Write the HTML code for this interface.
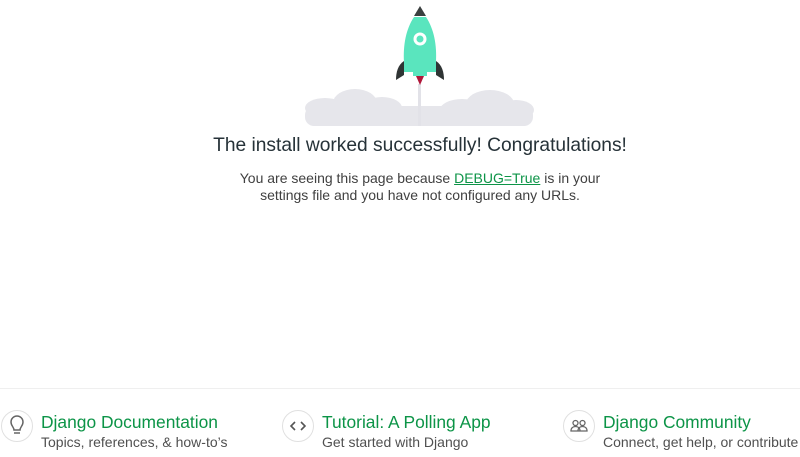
<!DOCTYPE html>
<html><head><meta charset="utf-8"><style>
*{margin:0;padding:0;box-sizing:border-box}
body{width:800px;height:457px;overflow:hidden;background:#fff;font-family:"Liberation Sans",sans-serif;position:relative;color:#263238}
.abs{position:absolute}
h1{position:absolute;top:135px;left:0;width:840px;text-align:center;font-size:19.2px;font-weight:normal;color:#263238;white-space:nowrap}
p.m{position:absolute;top:170px;left:0;width:840px;text-align:center;font-size:14px;line-height:17px;color:#404040;white-space:nowrap}
p.m a{color:#0c9447;text-decoration:underline}
.hr{position:absolute;top:388px;left:0;width:800px;height:1px;background:#efefef}
.it{position:absolute;top:411px;white-space:nowrap}
.ic{position:absolute;top:410px;width:32px;height:32px;border:1px solid #e0e0e0;border-radius:50%}
.t{font-size:17.4px;color:#0c9447;line-height:22px}
.s{font-size:14px;color:#505050;line-height:18px}
</style></head><body>
<svg class="abs" style="left:300px;top:0" width="240" height="130" viewBox="0 0 240 130">
<g fill="#e6e6eb">
<ellipse cx="55" cy="103" rx="22" ry="14"/><ellipse cx="82" cy="108" rx="20" ry="11"/><ellipse cx="25" cy="108" rx="20" ry="10"/><ellipse cx="105" cy="114" rx="14" ry="8"/>
<rect x="5" y="106" width="228" height="20" rx="9"/>
<ellipse cx="190" cy="104" rx="24" ry="14"/><ellipse cx="162" cy="110" rx="22" ry="11"/><ellipse cx="216" cy="110" rx="18" ry="10"/><ellipse cx="135" cy="115" rx="14" ry="8"/>
</g>
<rect x="118" y="84" width="3" height="42" fill="#e2e2e8"/>
<path d="M116 76h8l-4 9z" fill="#b0173a"/>
<path d="M120 6l-6 10h12z" fill="#3a3f3f"/>
<path d="M114 17h12c8 12 11 28 10 45v10h-32v-10c-1-17 2-33 10-45z" fill="#5ae5be"/>
<rect x="113" y="72" width="14" height="4" fill="#5ae5be"/>
<circle cx="120" cy="39" r="5" fill="none" stroke="#fff" stroke-width="3"/>
<path d="M104 61c-6 4-8 11-8 19l8-5z" fill="#2f3434"/>
<path d="M136 61c6 4 8 11 8 19l-8-5z" fill="#2f3434"/>
</svg>
<h1>The install worked successfully! Congratulations!</h1>
<p class="m">You are seeing this page because <a>DEBUG=True</a> is in your<br>settings file and you have not configured any URLs.</p>
<div class="hr"></div>
<div class="ic" style="left:1px"><svg width="30" height="30" viewBox="0 0 30 30"><path d="M12 19c0-3-3-4-3-8a6 6 0 0112 0c0 4-3 5-3 8z M12 22h6" fill="none" stroke="#666" stroke-width="1.5"/></svg></div>
<div class="it" style="left:41px"><div class="t">Django Documentation</div><div class="s">Topics, references, &amp; how-to’s</div></div>
<div class="ic" style="left:282px"><svg width="30" height="30" viewBox="0 0 30 30"><path d="M12 11l-4 4 4 4M18 11l4 4-4 4" fill="none" stroke="#555" stroke-width="1.6"/></svg></div>
<div class="it" style="left:322px"><div class="t">Tutorial: A Polling App</div><div class="s">Get started with Django</div></div>
<div class="ic" style="left:563px"><svg width="30" height="30" viewBox="0 0 30 30"><g fill="none" stroke="#666" stroke-width="1.3"><circle cx="11.5" cy="12" r="2.5"/><circle cx="18.5" cy="12" r="2.5"/><path d="M7 20c0-3 2-4.5 4.5-4.5S16 17 16 20zM14 20c0-3 2-4.5 4.5-4.5S23 17 23 20z"/></g></svg></div>
<div class="it" style="left:603px"><div class="t">Django Community</div><div class="s">Connect, get help, or contribute</div></div>
</body></html>
